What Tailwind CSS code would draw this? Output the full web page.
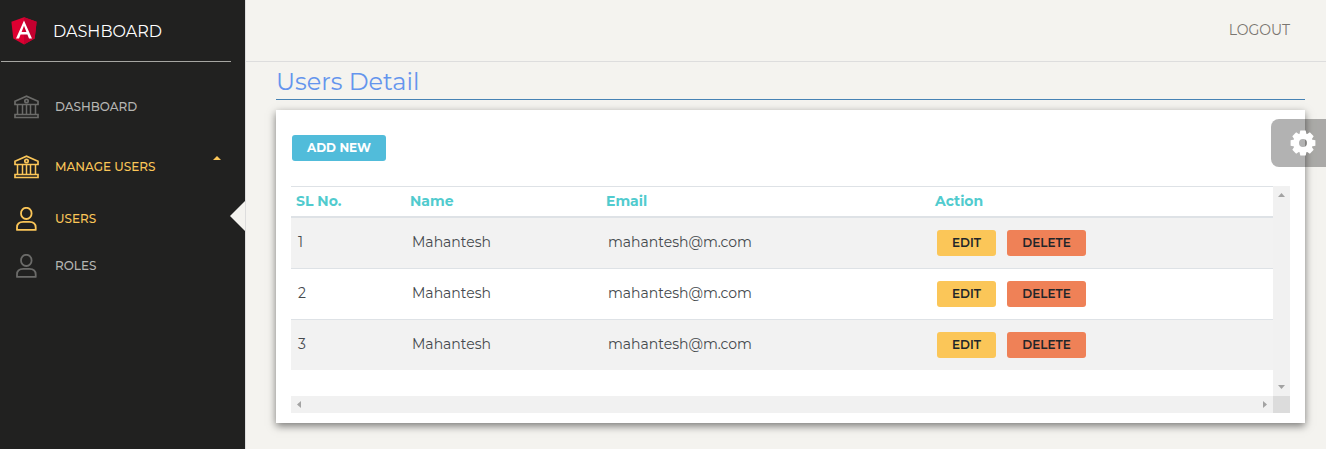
<!DOCTYPE html>
<html lang="en">
<head>
<meta charset="utf-8">
<title>Users Detail</title>
<script src="https://cdn.jsdelivr.net/npm/@tailwindcss/browser@4"></script>
</head>
<body class="relative flex h-[449px] w-[1326px] overflow-hidden bg-[#f4f3ef] font-['Montserrat','Inter',sans-serif]">
<svg class="hidden">
  <symbol id="bank" viewBox="0 0 25 24"><g fill="none" stroke="currentColor" stroke-width="1.7"><path d="M1 9.500V6.300L12.500 1.200 24 6.300v3.200z"/><circle cx="12.500" cy="6" r="1.700"/><path d="M3.500 10v9M8.500 10v9M12.500 10v9M16.500 10v9M21.500 10v9" stroke-width="1.500"/><path d="M1 19.500h23v3H1z"/></g></symbol>
  <symbol id="user" viewBox="0 0 21 24"><g fill="none" stroke="currentColor" stroke-width="1.8"><ellipse cx="10.300" cy="6.400" rx="5.300" ry="5.600"/><path d="M1 22.900v-2.400c0-3.800 2.600-5.600 6.200-5.600h6.200c3.600 0 6.300 1.800 6.300 5.600v2.400z" stroke-linejoin="round"/></g></symbol>
</svg>

<aside class="relative h-full w-[245px] shrink-0 bg-[#212120]">
  <div class="ml-px flex h-[62px] w-[230px] items-center border-b border-[#a6a6a2] pl-[10px]">
    <svg class="mt-px h-[28px] w-[26px]" viewBox="0 0 26 28"><path fill="#dd0031" d="M13 .3 25.600 4.700 23.700 21.500 13 27.500 2.300 21.500.4 4.700z"/><path fill="#c3002f" d="M13 .3 25.600 4.700 23.700 21.500 13 27.500z"/><path fill="#fff" fill-rule="evenodd" d="M13 3.500 21 21.400h-3l-1.600-4H9.600l-1.600 4H5zM13 8.700l-2.400 6.200h4.800z"/></svg>
    <span class="ml-[16px] pt-0.5 text-base leading-none text-white">DASHBOARD</span>
  </div>
  <nav class="text-xs font-medium leading-none">
    <div class="flex h-[90px] items-center pl-[14px] text-[#6b6b69]">
      <svg class="h-6 w-[25px]"><use href="#bank"/></svg><span class="ml-4 text-[#b5b5b2]">DASHBOARD</span>
    </div>
    <div class="flex h-[30px] items-center pl-[14px] text-[#fbc658]">
      <svg class="h-6 w-[25px]"><use href="#bank"/></svg><span class="ml-4">MANAGE USERS</span>
      <svg class="mb-[18px] ml-auto mr-6 h-1 w-2" viewBox="0 0 8 4"><path fill="currentColor" d="M4 0 8 4H0z"/></svg>
    </div>
    <div class="flex h-[74px] items-center pl-4 text-[#fbc658]">
      <svg class="h-6 w-[21px]"><use href="#user"/></svg><span class="ml-[18px]">USERS</span>
      <svg class="ml-auto mb-[6px] h-[30px] w-[15px]" viewBox="0 0 15 30"><path fill="#f4f3ef" d="M15 0v30L0 15z"/></svg>
    </div>
    <div class="flex h-5 items-center pl-4 text-[#6b6b69]">
      <svg class="h-6 w-[21px]"><use href="#user"/></svg><span class="ml-[18px] text-[#b5b5b2]">ROLES</span>
    </div>
  </nav>
</aside>

<main class="min-w-0 flex-1 border-l border-[#dddddd]">
  <header class="flex h-[62px] items-center justify-end border-b border-[#dddddd] pb-px pr-9 text-sm leading-none text-[#7a7670]"><span class="pb-px">LOGOUT</span></header>
  <div class="ml-[30px] mr-[21px]">
    <h1 class="h-[38px] border-b border-[#4682b4] text-2xl font-normal leading-[40px] text-[#6495ed]">Users Detail</h1>
    <section class="mt-[10px] h-[313px] bg-white px-[15px] pt-[25px] shadow-[0_3px_8px_rgba(0,0,0,0.5)]">
      <button class="ml-px block h-[26px] w-[94px] rounded-[3px] bg-[#51bcda] text-xs font-bold leading-none text-white">ADD NEW</button>
      <div class="mt-[25px] grid h-[227px] w-[999px] grid-cols-[982px_17px] grid-rows-[210px_17px]">
        <div class="text-sm leading-none text-[#45494d]">
          <div class="grid h-8 grid-cols-[114px_196px_329px_343px] items-center border-b-2 border-t border-[#dee2e6] pb-0.5 pl-[5px] font-bold text-[#51cbce]">
            <span>SL No.</span><span>Name</span><span>Email</span><span>Action</span>
          </div>
          <div class="grid h-[50px] grid-cols-[114px_196px_329px_343px] items-center bg-[#f2f2f2] pl-[7px]">
            <span class="pb-0.5">1</span><span class="pb-0.5">Mahantesh</span><span class="pb-0.5">mahantesh@m.com</span>
            <span class="flex gap-[11px] text-xs font-semibold leading-none text-[#212529]"><button class="h-[26px] w-[59px] rounded-[3px] bg-[#fbc658]">EDIT</button><button class="h-[26px] w-[79px] rounded-[3px] bg-[#ef8157]">DELETE</button></span>
          </div>
          <div class="grid h-[51px] grid-cols-[114px_196px_329px_343px] items-center border-t border-[#dee2e6] pl-[7px]">
            <span class="pb-0.5">2</span><span class="pb-0.5">Mahantesh</span><span class="pb-0.5">mahantesh@m.com</span>
            <span class="flex gap-[11px] text-xs font-semibold leading-none text-[#212529]"><button class="h-[26px] w-[59px] rounded-[3px] bg-[#fbc658]">EDIT</button><button class="h-[26px] w-[79px] rounded-[3px] bg-[#ef8157]">DELETE</button></span>
          </div>
          <div class="grid h-[51px] grid-cols-[114px_196px_329px_343px] items-center border-t border-[#dee2e6] bg-[#f2f2f2] pl-[7px]">
            <span class="pb-0.5">3</span><span class="pb-0.5">Mahantesh</span><span class="pb-0.5">mahantesh@m.com</span>
            <span class="flex gap-[11px] text-xs font-semibold leading-none text-[#212529]"><button class="h-[26px] w-[59px] rounded-[3px] bg-[#fbc658]">EDIT</button><button class="h-[26px] w-[79px] rounded-[3px] bg-[#ef8157]">DELETE</button></span>
          </div>
        </div>
        <div class="flex flex-col items-center justify-between bg-[#f1f1f1] py-[7px] text-[#a3a3a3]">
          <svg class="h-1 w-[7px]" viewBox="0 0 7 4"><path fill="currentColor" d="M3.500 0 7 4H0z"/></svg>
          <svg class="h-1 w-[7px]" viewBox="0 0 7 4"><path fill="currentColor" d="M3.500 4 7 0H0z"/></svg>
        </div>
        <div class="flex items-center justify-between bg-[#f1f1f1] px-[6px] text-[#a3a3a3]">
          <svg class="h-[7px] w-1" viewBox="0 0 4 7"><path fill="currentColor" d="M0 3.500 4 0v7z"/></svg>
          <svg class="h-[7px] w-1" viewBox="0 0 4 7"><path fill="currentColor" d="M4 3.500 0 0v7z"/></svg>
        </div>
        <div class="bg-[#dcdcdc]"></div>
      </div>
    </section>
  </div>
</main>

<div class="absolute right-0 top-[119px] flex h-12 w-[55px] items-center rounded-l-lg bg-black/30 pl-[19px]">
  <svg class="h-[26px] w-[26px] text-white" viewBox="-13 -13 26 26"><g fill="currentColor"><path fill-rule="evenodd" d="M0-9.800A9.800 9.800 0 1 1 0 9.800 9.800 9.800 0 0 1 0-9.800zM0-4A4 4 0 1 0 0 4 4 4 0 0 0 0-4z"/><path id="tooth" d="M-3.600-8.500-2.700-12.400h5.400L3.600-8.500z"/><use href="#tooth" transform="rotate(45)"/><use href="#tooth" transform="rotate(90)"/><use href="#tooth" transform="rotate(135)"/><use href="#tooth" transform="rotate(180)"/><use href="#tooth" transform="rotate(225)"/><use href="#tooth" transform="rotate(270)"/><use href="#tooth" transform="rotate(315)"/></g></svg>
</div>
</body>
</html>
